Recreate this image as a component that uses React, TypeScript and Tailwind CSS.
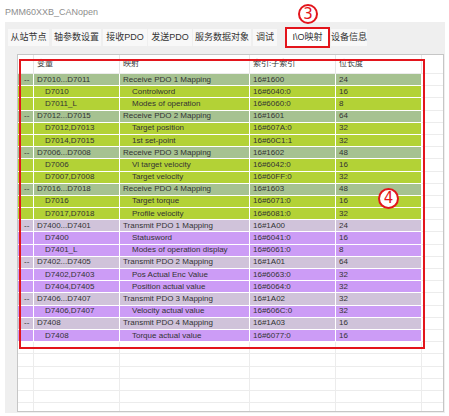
import React from "react";

type Kind = "g" | "gc" | "p" | "pc";

interface MapRow {
  kind: Kind;
  v: string;
  m: string;
  i: string;
  b: string;
}

const rows: MapRow[] = [
  { kind: "g", v: "D7010...D7011", m: "Receive PDO 1 Mapping", i: "16#1600", b: "24" },
  { kind: "gc", v: "D7010", m: "Controlword", i: "16#6040:0", b: "16" },
  { kind: "gc", v: "D7011_L", m: "Modes of operation", i: "16#6060:0", b: "8" },
  { kind: "g", v: "D7012...D7015", m: "Receive PDO 2 Mapping", i: "16#1601", b: "64" },
  { kind: "gc", v: "D7012,D7013", m: "Target position", i: "16#607A:0", b: "32" },
  { kind: "gc", v: "D7014,D7015", m: "1st set-point", i: "16#60C1:1", b: "32" },
  { kind: "g", v: "D7006...D7008", m: "Receive PDO 3 Mapping", i: "16#1602", b: "48" },
  { kind: "gc", v: "D7006", m: "Vl target velocity", i: "16#6042:0", b: "16" },
  { kind: "gc", v: "D7007,D7008", m: "Target velocity", i: "16#60FF:0", b: "32" },
  { kind: "g", v: "D7016...D7018", m: "Receive PDO 4 Mapping", i: "16#1603", b: "48" },
  { kind: "gc", v: "D7016", m: "Target torque", i: "16#6071:0", b: "16" },
  { kind: "gc", v: "D7017,D7018", m: "Profile velocity", i: "16#6081:0", b: "32" },
  { kind: "p", v: "D7400...D7401", m: "Transmit PDO 1 Mapping", i: "16#1A00", b: "24" },
  { kind: "pc", v: "D7400", m: "Statusword", i: "16#6041:0", b: "16" },
  { kind: "pc", v: "D7401_L", m: "Modes of operation display", i: "16#6061:0", b: "8" },
  { kind: "p", v: "D7402...D7405", m: "Transmit PDO 2 Mapping", i: "16#1A01", b: "64" },
  { kind: "pc", v: "D7402,D7403", m: "Pos Actual Enc Value", i: "16#6063:0", b: "32" },
  { kind: "pc", v: "D7404,D7405", m: "Position actual value", i: "16#6064:0", b: "32" },
  { kind: "p", v: "D7406...D7407", m: "Transmit PDO 3 Mapping", i: "16#1A02", b: "32" },
  { kind: "pc", v: "D7406,D7407", m: "Velocity actual value", i: "16#606C:0", b: "32" },
  { kind: "p", v: "D7408", m: "Transmit PDO 4 Mapping", i: "16#1A03", b: "16" },
  { kind: "pc", v: "D7408", m: "Torque actual value", i: "16#6077:0", b: "16" },
];

const bgOf: Record<Kind, string> = {
  g: "bg-[#a6c291]",
  gc: "bg-[#b3d236]",
  p: "bg-[#d0c3da]",
  pc: "bg-[#cc9cf6]",
};

const tabs = [
  { label: "从站节点", cls: "ml-[3px] w-[41px]" },
  { label: "轴参数设置", cls: "ml-[3px] w-[49px]" },
  { label: "接收PDO", cls: "ml-[2px] w-[44px]" },
  { label: "发送PDO", cls: "ml-[1px] w-[44px]" },
  { label: "服务数据对象", cls: "ml-[1px] w-[58px]" },
  { label: "调试", cls: "ml-[2px] w-[24px]" },
  { label: "I\\O映射", cls: "ml-[9px] w-[43px] bg-white" },
  { label: "设备信息", cls: "ml-[2px] w-[36px]" },
];

const cell = "h-full flex items-center shrink-0";

const DataRow = ({ row }: { row: MapRow }) => {
  const group = row.kind === "g" || row.kind === "p";
  const bg = bgOf[row.kind];
  const line = `${cell} ${bg} border-r border-b border-white`;
  return (
    <div className="flex h-[12.2px] text-[8px] leading-none text-[#333]">
      <div className={`${line} w-[16px] pl-[6px]`}>{group ? "--" : ""}</div>
      <div className={`${line} w-[86px] ${group ? "pl-[3px]" : "pl-[11px]"}`}>{row.v}</div>
      <div className={`${line} w-[130px] ${group ? "pl-[3px]" : "pl-[12px]"}`}>{row.m}</div>
      <div className={`${line} w-[86px] pl-[3px]`}>{row.i}</div>
      <div className={`${line} w-[86px] pl-[3px]`}>{row.b}</div>
      <div className={`${cell} flex-1 border-b border-[#ececec]`}></div>
    </div>
  );
};

const EmptyRow = () => {
  const line = `${cell} border-r border-b border-[#ececec]`;
  return (
    <div className="flex h-[12.2px]">
      <div className={`${line} w-[16px]`}></div>
      <div className={`${line} w-[86px]`}></div>
      <div className={`${line} w-[130px]`}></div>
      <div className={`${line} w-[86px]`}></div>
      <div className={`${line} w-[86px]`}></div>
      <div className={`${cell} flex-1 border-b border-[#ececec]`}></div>
    </div>
  );
};

export default function App() {
  const head = `${cell} border-r border-[#e6e6e6] pl-[3px]`;
  return (
    <div className="relative w-[449px] h-[416px] bg-white overflow-hidden font-['Liberation_Sans','Noto_Sans_CJK_SC',sans-serif]">
      <div className="h-[22px] pl-[5px] pt-[4px] flex items-center text-[9px] text-[#8e8e8e]">
        PMM60XXB_CANopen
      </div>

      <div className="ml-[5px] w-[440px] h-[391px] bg-[#efefef] pt-[7px]">
        <div className="flex h-[17px] text-[9px] text-[#333]">
          {tabs.map((t) => (
            <div
              key={t.label}
              className={`${t.cls} h-full flex items-center justify-center bg-[#f8f8f8] leading-none`}
            >
              {t.label}
            </div>
          ))}
        </div>

        <div className="ml-[12px] mt-[8px] w-[427px] h-[358px] bg-white border border-[#c6c6c6] overflow-hidden">
          <div className="flex h-[19px] text-[8px] leading-none text-[#333] border-b border-[#ececec]">
            <div className={`${head} w-[16px]`}></div>
            <div className={`${head} w-[86px]`}>变量</div>
            <div className={`${head} w-[130px]`}>映射</div>
            <div className={`${head} w-[86px]`}>索引:子索引</div>
            <div className={`${head} w-[86px]`}>位长度</div>
            <div className={`${cell} flex-1`}></div>
          </div>
          {rows.map((r, idx) => (
            <DataRow key={idx} row={r} />
          ))}
          {[0, 1, 2, 3, 4, 5].map((k) => (
            <EmptyRow key={k} />
          ))}
        </div>
      </div>

      {/* annotations */}
      <div className="absolute left-[298px] top-[4px] w-[20px] h-[20px] rounded-full border-2 border-[#e3151c] flex items-center justify-center text-[15px] leading-none text-[#e3151c] font-['DejaVu_Sans',sans-serif]">
        3
      </div>
      <div className="absolute left-[285px] top-[27px] w-[45px] h-[21px] border-2 border-[#e3151c]"></div>
      <div className="absolute left-[19px] top-[59px] w-[406px] h-[290px] border-2 border-[#e3151c]"></div>
      <div className="absolute left-[378px] top-[188px] w-[21px] h-[21px] rounded-full bg-white border-2 border-[#e3151c] flex items-center justify-center text-[15px] leading-none text-[#e3151c] font-['DejaVu_Sans',sans-serif]">
        4
      </div>
    </div>
  );
}
